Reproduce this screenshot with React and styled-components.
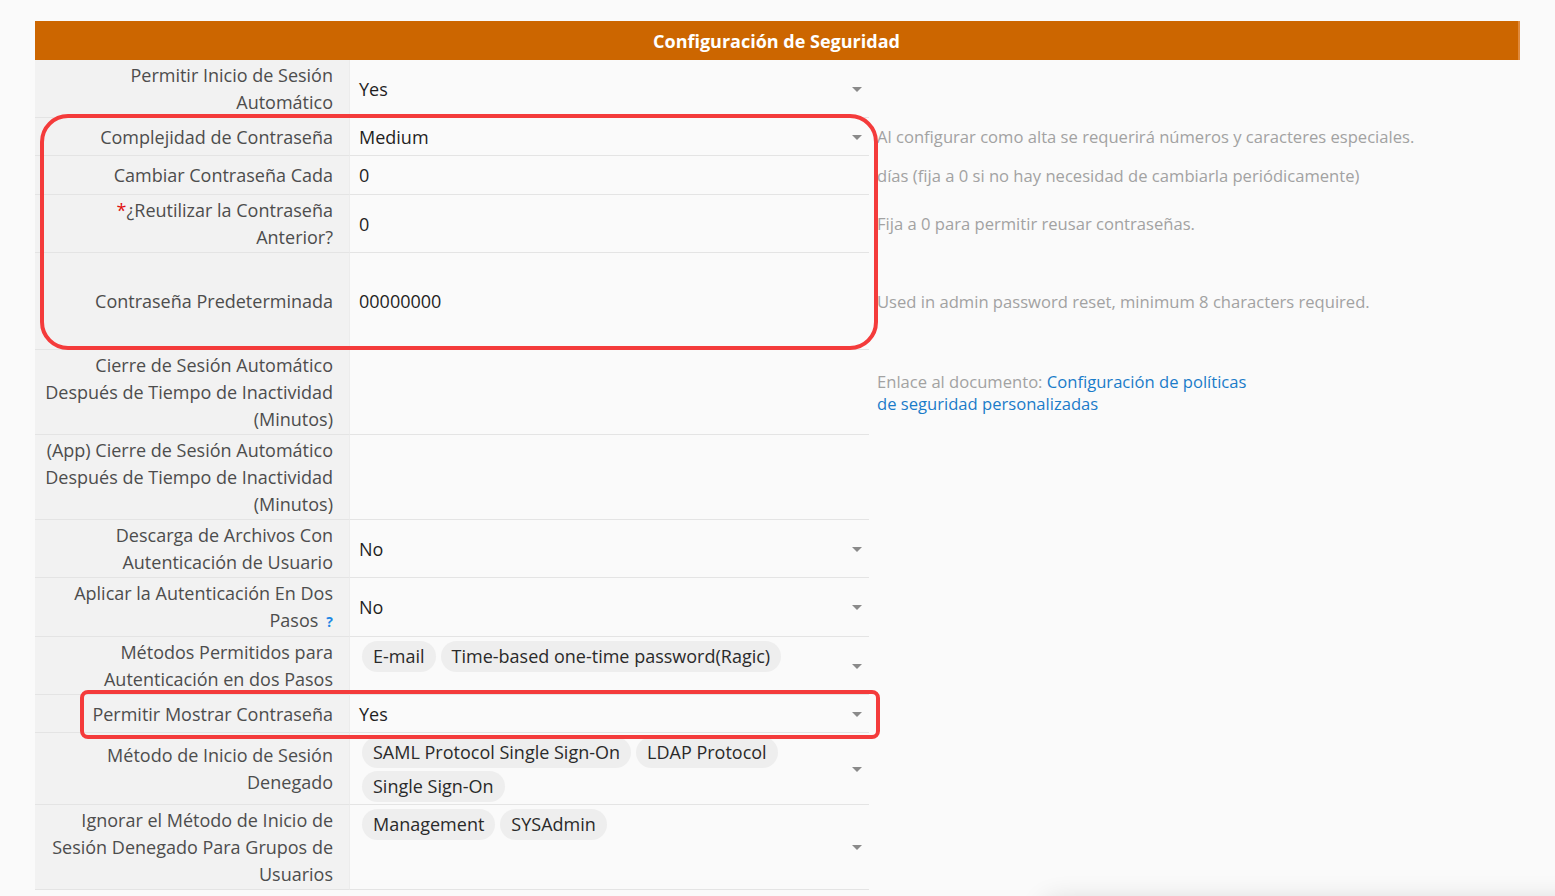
import React from "react";
import styled, { createGlobalStyle } from "styled-components";

const Global = createGlobalStyle`
  html, body { margin: 0; padding: 0; background: #fafafa; }
  body { font-family: "Open Sans", "Noto Sans", sans-serif; overflow: hidden; }
`;

const Page = styled.div`
  padding: 21px 35px 0 35px;
  width: 1485px;
`;

const Sheet = styled.div`
  position: relative;
`;

const Header = styled.div`
  height: 39px;
  background: #cc6600;
  color: #fff;
  font-weight: 700;
  font-size: 18px;
  display: flex;
  align-items: center;
  justify-content: center;
  border-right: 2px solid #e08a3c;
`;

const Row = styled.div`
  display: grid;
  grid-template-columns: 315px 519px 1fr;
  min-height: ${(p) => p.$h || 38}px;
`;

const Label = styled.div`
  background: #f2f2f2;
  border-bottom: 1px solid #e4e4e4;
  border-right: 1px solid #ececec;
  color: #4d4d4d;
  font-size: 18px;
  line-height: 27px;
  text-align: right;
  padding: 2px 16px 1px 8px;
  display: flex;
  align-items: center;
  justify-content: flex-end;
`;

const Value = styled.div`
  background: #fafafa;
  border-bottom: 1px solid #e4e4e4;
  color: #1f1f1f;
  font-size: 18px;
  line-height: 27px;
  padding: 2px 7px 1px 9px;
  display: flex;
  align-items: ${(p) => (p.$top ? "flex-start" : "center")};
  justify-content: space-between;
`;

const Chips = styled.div`
  display: flex;
  flex-wrap: wrap;
  gap: 3px 5px;
  padding-top: 2px;
  margin-left: 3px;
`;

const Chip = styled.span`
  background: #eeeeee;
  color: #2a2a2a;
  border-radius: 16px;
  padding: 2px 11px;
  font-size: 18px;
  line-height: 27px;
`;

const Arrow = styled.span`
  width: 0;
  height: 0;
  border-left: 5px solid transparent;
  border-right: 5px solid transparent;
  border-top: 5px solid #8a8a8a;
  flex: none;
  align-self: center;
  margin-left: 8px;
`;

const Desc = styled.div`
  color: #a2a2a2;
  font-size: 16.6px;
  line-height: 22px;
  padding-left: 8px;
  display: flex;
  align-items: center;
`;

const DocText = styled.div`
  max-width: 375px;
`;

const Link = styled.a`
  color: #1a7cc9;
  text-decoration: none;
`;

const Req = styled.span`
  color: #e01010;
`;

const Help = styled.span`
  color: #1e88e5;
  font-weight: 700;
  font-size: 14px;
  margin-left: 8px;
`;

const Highlight = styled.div`
  position: absolute;
  left: ${(p) => p.$l}px;
  top: ${(p) => p.$t}px;
  width: ${(p) => p.$w}px;
  height: ${(p) => p.$h}px;
  border: 4px solid #f43b3b;
  border-radius: ${(p) => p.$r}px;
  box-sizing: border-box;
  pointer-events: none;
`;

const FloatShadow = styled.div`
  position: fixed;
  left: 1045px;
  top: 902px;
  width: 540px;
  height: 80px;
  border-radius: 10px;
  background: #fff;
  box-shadow: 0 0 28px rgba(0, 0, 0, 0.16);
`;

const rows = [
  { label: "Permitir Inicio de Sesión Automático", value: "Yes", select: true, h: 58 },
  { label: "Complejidad de Contraseña", value: "Medium", select: true, desc: "Al configurar como alta se requerirá números y caracteres especiales." },
  { label: "Cambiar Contraseña Cada", value: "0", desc: "días (fija a 0 si no hay necesidad de cambiarla periódicamente)", h: 39 },
  { label: "¿Reutilizar la Contraseña Anterior?", req: true, value: "0", desc: "Fija a 0 para permitir reusar contraseñas.", h: 57 },
  { label: "Contraseña Predeterminada", value: "00000000", desc: "Used in admin password reset, minimum 8 characters required.", h: 97 },
  { label: "Cierre de Sesión Automático Después de Tiempo de Inactividad (Minutos)", value: "", doc: true, h: 85 },
  { label: "(App) Cierre de Sesión Automático Después de Tiempo de Inactividad (Minutos)", value: "", h: 85 },
  { label: "Descarga de Archivos Con Autenticación de Usuario", value: "No", select: true, h: 58 },
  { label: "Aplicar la Autenticación En Dos Pasos", help: true, value: "No", select: true, h: 58 },
  { label: "Métodos Permitidos para Autenticación en dos Pasos", chips: ["E-mail", "Time-based one-time password(Ragic)"], select: true, h: 58 },
  { label: "Permitir Mostrar Contraseña", value: "Yes", select: true },
  { label: "Método de Inicio de Sesión Denegado", chips: ["SAML Protocol Single Sign-On", "LDAP Protocol", "Single Sign-On"], select: true, h: 72 },
  { label: "Ignorar el Método de Inicio de Sesión Denegado Para Grupos de Usuarios", chips: ["Management", "SYSAdmin"], select: true, h: 85 },
];

export default function App() {
  return (
    <>
      <Global />
      <Page>
        <Sheet>
          <Header>Configuración de Seguridad</Header>
          {rows.map((r, i) => (
            <Row key={i} $h={r.h}>
              <Label>
                <span>
                  {r.req && <Req>*</Req>}
                  {r.label}
                  {r.help && <Help>?</Help>}
                </span>
              </Label>
              <Value $top={!!r.chips}>
                {r.chips ? (
                  <Chips>
                    {r.chips.map((c) => (
                      <Chip key={c}>{c}</Chip>
                    ))}
                  </Chips>
                ) : (
                  <span>{r.value}</span>
                )}
                {r.select && <Arrow />}
              </Value>
              <Desc>
                {r.desc}
                {r.doc && (
                  <DocText>
                    Enlace al documento:{" "}
                    <Link href="#">Configuración de políticas de seguridad personalizadas</Link>
                  </DocText>
                )}
              </Desc>
            </Row>
          ))}
          <Highlight $l={5} $t={93} $w={838} $h={236} $r={28} />
          <Highlight $l={45} $t={669} $w={800} $h={49} $r={8} />
        </Sheet>
      </Page>
      <FloatShadow />
    </>
  );
}
